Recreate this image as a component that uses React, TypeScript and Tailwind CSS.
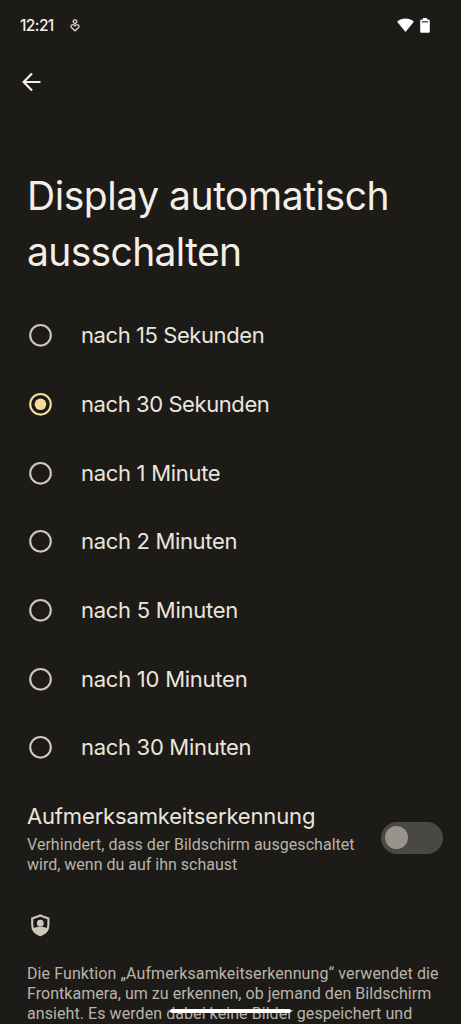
import React from 'react';

const options = [
  { label: 'nach 15 Sekunden', tracking: 'tracking-[-0.42px]' },
  { label: 'nach 30 Sekunden', tracking: 'tracking-[-0.42px]' },
  { label: 'nach 1 Minute', tracking: 'tracking-[-0.3px]' },
  { label: 'nach 2 Minuten', tracking: 'tracking-[-0.33px]' },
  { label: 'nach 5 Minuten', tracking: 'tracking-[-0.27px]' },
  { label: 'nach 10 Minuten', tracking: 'tracking-[-0.25px]' },
  { label: 'nach 30 Minuten', tracking: 'tracking-[-0.3px]' },
];

const selected = 'nach 30 Sekunden';

const StatusBar = () => (
  <div className="flex h-[50px] items-center justify-between pl-5 pr-[31px]">
    <div className="flex items-center">
      <span className="w-[50px] whitespace-nowrap pt-px text-[15.5px] font-medium leading-5 tracking-[-0.6px] text-[#f3efe8]">12:21</span>
      <svg width="10" height="13" viewBox="0 0 10 13" fill="none" stroke="#d8d4cc" strokeWidth="1.3">
        <circle cx="5" cy="2.6" r="1.8" />
        <path d="M5 11.8 1.4 8.5C-.2 6.4 2.8 4.4 5 6.9c2.2-2.5 5.2-.5 3.6 1.6z" />
      </svg>
    </div>
    <div className="flex items-center gap-[6px]">
      <svg width="17" height="14" viewBox="0 0 17 14" fill="#fff">
        <path d="M8.5 14 .2 3.8C4.8-.5 12.2-.5 16.8 3.8z" />
      </svg>
      <svg width="10" height="15" viewBox="0 0 10 15">
        <path d="M3 0h4v1.5h1.5A1.3 1.3 0 0 1 9.8 2.8v10.7A1.3 1.3 0 0 1 8.5 14.8h-7A1.3 1.3 0 0 1 .2 13.5V2.8a1.3 1.3 0 0 1 1.3-1.3H3z" fill="#fff" />
        <path d="M1.8 3.8h6.4" stroke="#1d1b17" strokeWidth="1.1" />
      </svg>
    </div>
  </div>
);

const Radio = ({ checked }: { checked: boolean }) => (
  <svg width="25" height="24" viewBox="0 0 25 24" fill="none" className={checked ? 'text-[#f6dc9b]' : 'text-[#cdc7bc]'}>
    <circle cx="12.5" cy="12.3" r="10.3" stroke="currentColor" strokeWidth="2.1" />
    {checked && <circle cx="12.5" cy="12.3" r="5.8" fill="currentColor" />}
  </svg>
);

export default function App() {
  return (
    <main className="relative flex h-[1024px] w-[461px] flex-col overflow-hidden bg-[#1d1b17] font-['Inter',sans-serif] text-[#eae5dc]">
      <StatusBar />

      {/* Toolbar */}
      <div className="flex h-[63px] items-center pl-[22px]">
        <svg width="20" height="20" viewBox="0 0 20 20" fill="none" stroke="#f3efe8" strokeWidth="2.2">
          <path d="M18.5 10H2M10 1.5 1.6 10l8.4 8.5" />
        </svg>
      </div>

      <h1 className="mt-[55px] pl-[27px] text-[39px] leading-14 text-[#f3efe8]">
        <span className="block whitespace-nowrap tracking-[-0.45px]">Display automatisch</span>
        <span className="block whitespace-nowrap tracking-[-0.65px]">ausschalten</span>
      </h1>

      {/* Timeout options */}
      <ul className="mt-[21px]">
        {options.map((option) => (
          <li key={option.label} className="flex h-[68.7px] items-center gap-[28px] pl-[28px]">
            <Radio checked={option.label === selected} />
            <span className={`whitespace-nowrap text-[22px] leading-7 ${option.tracking}`}>{option.label}</span>
          </li>
        ))}
      </ul>

      {/* Screen attention */}
      <section className="mt-[19px] flex items-center justify-between pl-[27px] pr-[18px]">
        <div>
          <h2 className="whitespace-nowrap text-[22px] leading-[30px] tracking-[-0.16px]">Aufmerksamkeitserkennung</h2>
          <p className="mt-1 font-['Roboto',sans-serif] text-[16px] leading-5 text-[#b9b4aa]">
            <span className="block whitespace-nowrap tracking-[0.04px]">Verhindert, dass der Bildschirm ausgeschaltet</span>
            <span className="block whitespace-nowrap">wird, wenn du auf ihn schaust</span>
          </p>
        </div>
        <div className="flex h-8 w-[62px] items-center rounded-full bg-[#4a4843] pl-1">
          <div className="size-[23px] rounded-full bg-[#98948b]" />
        </div>
      </section>

      {/* Privacy note */}
      <section className="mt-[37px] pl-[27px]">
        <svg width="26" height="26" viewBox="0 0 26 26" className="text-[#cdc7bc]">
          <path d="M13.3 3.4 21.4 6.4v6.3c0 5-3.3 8.9-8.1 10.5-4.8-1.6-8.1-5.5-8.1-10.5V6.4z" fill="none" stroke="currentColor" strokeWidth="2.1" />
          <circle cx="13.3" cy="11.2" r="3.4" fill="currentColor" />
          <path d="M5.8 16.8c3.6-2.6 11.4-2.6 15 0-1.5 3-4.2 5-7.5 6-3.3-1-6-3-7.5-6z" fill="currentColor" />
        </svg>
        <p className="mt-[26px] font-['Roboto',sans-serif] text-[16px] leading-5 text-[#b9b4aa]">
          <span className="block whitespace-nowrap tracking-[0.09px]">Die Funktion „Aufmerksamkeitserkennung“ verwendet die</span>
          <span className="block whitespace-nowrap tracking-[0.04px]">Frontkamera, um zu erkennen, ob jemand den Bildschirm</span>
          <span className="block whitespace-nowrap tracking-[0.07px]">ansieht. Es werden dabei keine Bilder gespeichert und</span>
        </p>
      </section>

      {/* Gesture bar */}
      <div className="absolute bottom-[11px] left-[170px] h-1 w-[121px] rounded-full bg-white" />
    </main>
  );
}
